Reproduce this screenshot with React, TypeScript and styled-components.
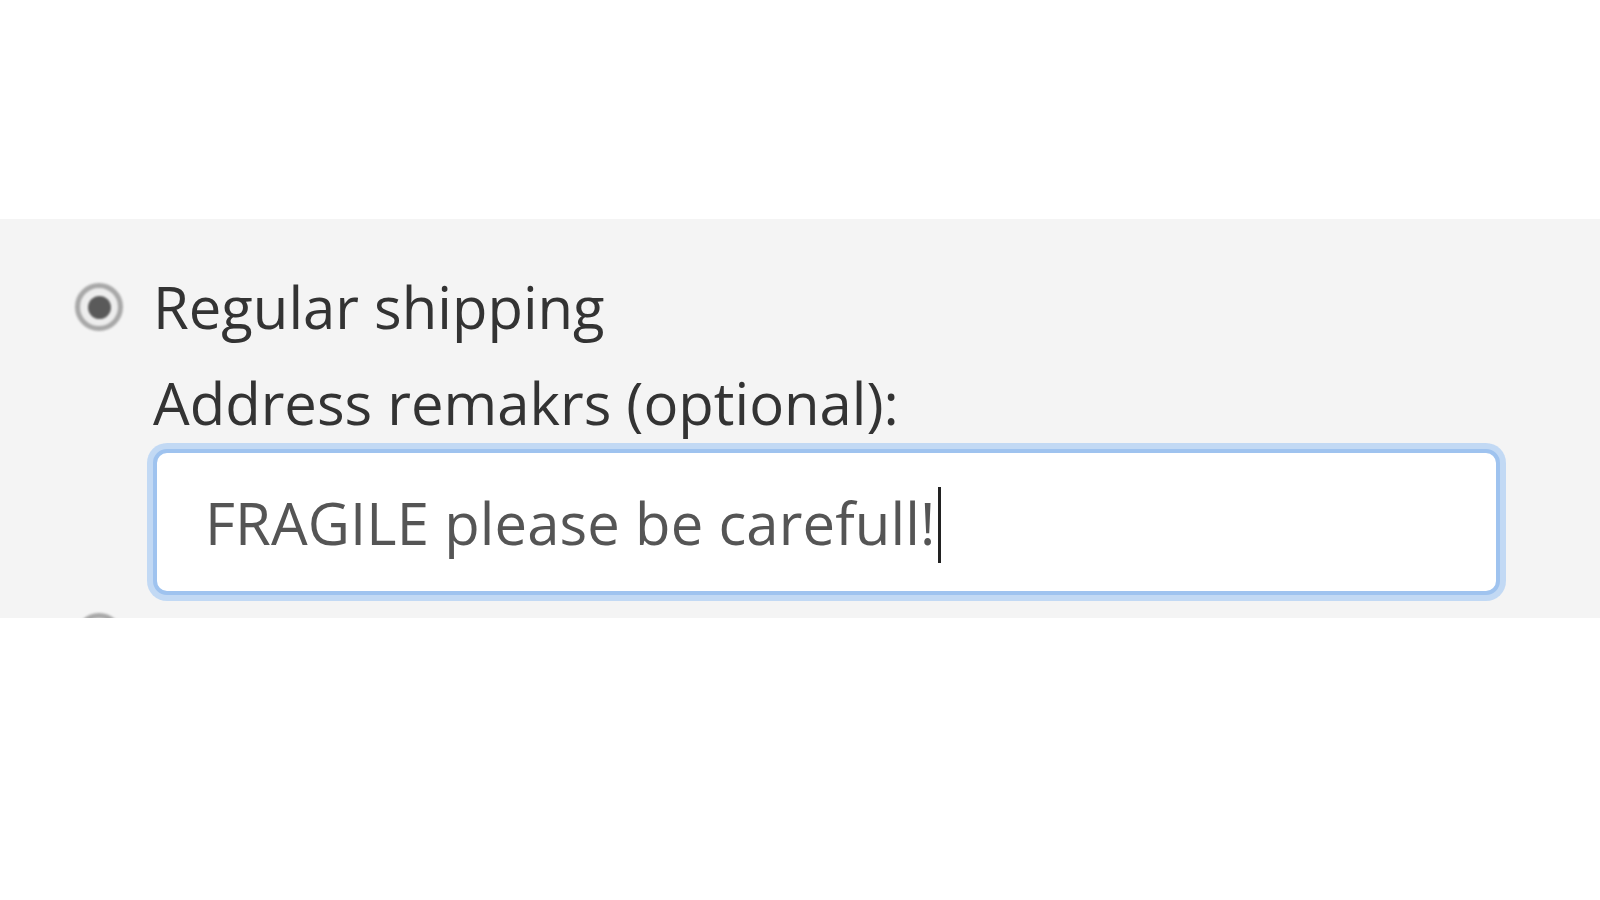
import React from "react";
import styled, { createGlobalStyle } from "styled-components";

const GlobalStyle = createGlobalStyle`
  html, body {
    margin: 0;
    padding: 0;
    background: #ffffff;
  }
  body {
    font-family: "Open Sans", "Noto Sans", "Liberation Sans", sans-serif;
  }
`;

const Page = styled.div`
  padding-top: 219px;
`;

const Panel = styled.div`
  height: 399px;
  box-sizing: border-box;
  background: #f4f4f4;
  overflow: hidden;
  padding: 40px 0 0 75px;
  display: flex;
  flex-direction: column;
`;

const Option = styled.label`
  display: flex;
  align-items: center;
  gap: 30px;
  font-size: 58px;
  line-height: 96px;
  color: #333333;
`;

const Radio = styled.span<{ checked?: boolean }>`
  flex: none;
  width: 48px;
  height: 48px;
  box-sizing: border-box;
  border-radius: 50%;
  border: 5px solid #a8a8a8;
  background: radial-gradient(circle, #f4f4f4 0%, #e8e8e8 100%);
  display: flex;
  align-items: center;
  justify-content: center;
  filter: blur(0.8px);

  &::after {
    content: "";
    width: 23px;
    height: 23px;
    border-radius: 50%;
    background: ${(p) => (p.checked ? "#5a5a5a" : "transparent")};
  }
`;

const Remarks = styled.div`
  display: flex;
  flex-direction: column;
  margin-left: 78px;
  margin-top: 6px;
`;

const FieldLabel = styled.div`
  font-size: 58px;
  line-height: 84px;
  color: #333333;
`;

const Field = styled.div`
  width: 1347px;
  height: 146px;
  box-sizing: border-box;
  margin-top: 4px;
  border: 4px solid #9fc3ef;
  border-radius: 14px;
  box-shadow: 0 0 0 6px rgba(178, 208, 244, 0.75);
  background: #ffffff;
  display: flex;
  align-items: center;
  padding-left: 48px;
  font-size: 58px;
  letter-spacing: 0.1px;
  color: #555555;
`;

const Caret = styled.span`
  display: inline-block;
  width: 3px;
  height: 76px;
  margin-left: 3px;
  margin-top: 6px;
  background: #222222;
`;

const NextOption = styled.div`
  margin-top: 18px;
  flex: none;
`;

export default function App() {
  return (
    <>
      <GlobalStyle />
      <Page>
        <Panel>
          <Option>
            <Radio checked />
            Regular shipping
          </Option>
          <Remarks>
            <FieldLabel>Address remakrs (optional):</FieldLabel>
            <Field>
              <span>FRAGILE please be carefull!</span>
              <Caret />
            </Field>
          </Remarks>
          <NextOption>
            <Radio />
          </NextOption>
        </Panel>
      </Page>
    </>
  );
}
